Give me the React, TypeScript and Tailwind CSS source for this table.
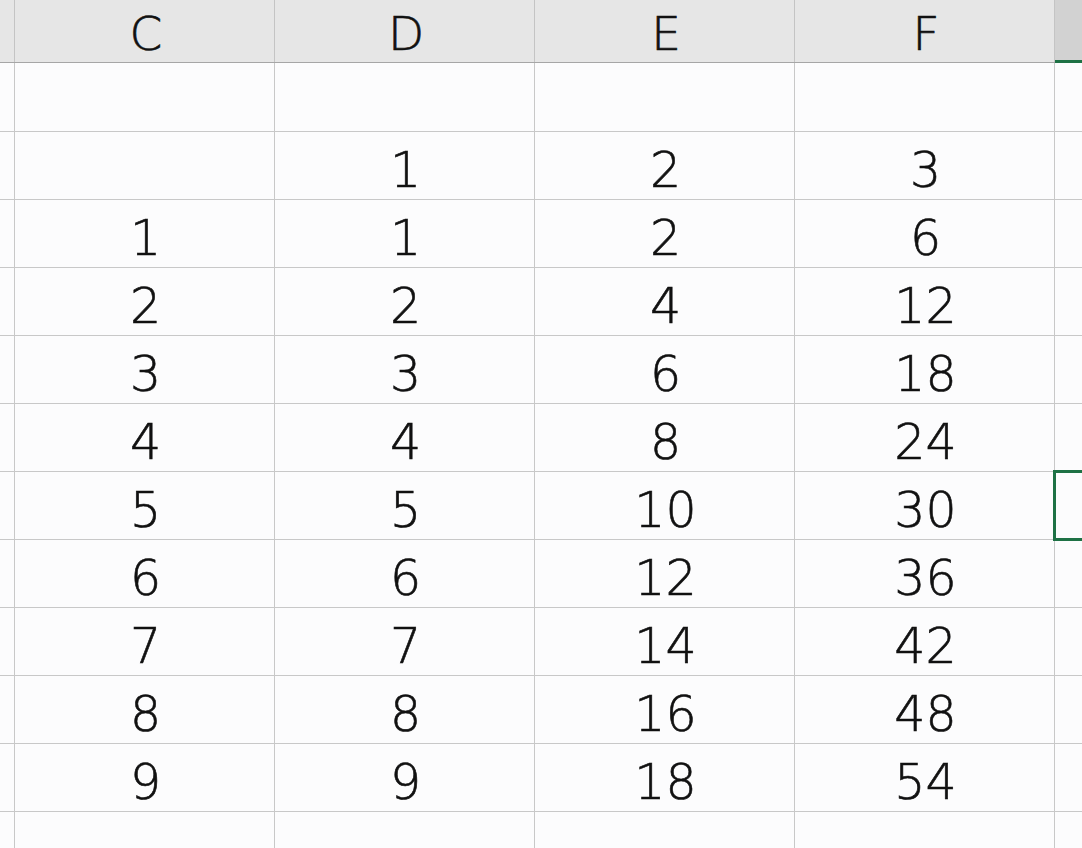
const rows: (number | null)[][] = [
  [null, null, null, null],
  [null, 1, 2, 3],
  [1, 1, 2, 6],
  [2, 2, 4, 12],
  [3, 3, 6, 18],
  [4, 4, 8, 24],
  [5, 5, 10, 30],
  [6, 6, 12, 36],
  [7, 7, 14, 42],
  [8, 8, 16, 48],
  [9, 9, 18, 54],
  [null, null, null, null],
];

const cols = ['C', 'D', 'E', 'F'];
const font = { fontFamily: '"DejaVu Sans", "Noto Sans CJK SC", sans-serif' };

export default function App() {
  return (
    <div className="w-[1082px] h-[848px] overflow-hidden bg-[#fcfcfd] text-[#111]" style={font}>
      {/* column header */}
      <div className="flex h-[63px] bg-[#e6e6e6] border-b border-[#a6a6a6]">
        <div className="w-[15px] shrink-0 border-r border-[#c4c4c4]" />
        {cols.map((c) => (
          <div
            key={c}
            className="w-[260px] shrink-0 border-r border-[#c4c4c4] flex items-center justify-center text-[47px] font-extralight leading-none pt-[4px] pl-[3px] [-webkit-text-stroke:0.6px_#111]"
          >
            {c}
          </div>
        ))}
        <div className="flex-1 bg-[#d2d2d2] border-b-[3px] border-[#1e7145] -mb-px" />
      </div>

      {/* body */}
      {rows.map((r, i) => (
        <div key={i} className={`flex border-b border-[#c8c8c8] ${i === 0 ? 'h-[69px]' : 'h-[68px]'}`}>
          <div className="w-[15px] shrink-0 border-r border-[#c8c8c8]" />
          {r.map((v, j) => (
            <div
              key={j}
              className="w-[260px] shrink-0 border-r border-[#c8c8c8] flex items-center justify-center text-[49px] font-extralight leading-none pt-[9px] pl-[2px] [-webkit-text-stroke:0.6px_#111]"
            >
              {v ?? ''}
            </div>
          ))}
          <div className="flex-1 relative">
            {i === 6 && (
              <div className="absolute left-[-2px] top-[-2px] right-[-4px] bottom-[-2px] border-[3px] border-[#1e7145]" />
            )}
          </div>
        </div>
      ))}
    </div>
  );
}
